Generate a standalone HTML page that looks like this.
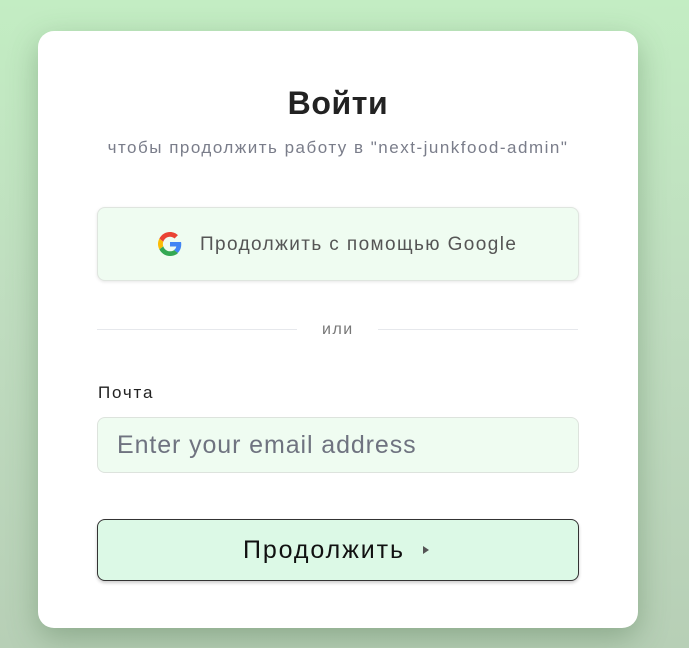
<!DOCTYPE html>
<html><head><meta charset="utf-8"><style>
html,body{margin:0;width:689px;height:648px;overflow:hidden}
body{background:linear-gradient(180deg,#c3edc3 0%,#bfdcbf 50%,#b7cfb6 100%);font-family:"Liberation Sans",sans-serif;position:relative}
.card{position:absolute;left:38px;top:31px;width:600px;height:597px;background:#fff;border-radius:16px;box-shadow:0 10px 30px rgba(60,100,60,.35)}
.abs{position:absolute;white-space:nowrap}
h1{position:absolute;top:83px;left:38px;width:600px;margin:0;text-align:center;font-size:32px;font-weight:bold;color:#222;line-height:40px;letter-spacing:0.6px}
.sub{top:138px;left:38px;width:600px;text-align:center;font-size:17px;color:#7a7d8a;letter-spacing:1.5px}
.g{left:97px;top:207px;width:480px;height:72px;border:1px solid #dfe5df;border-radius:8px;background:#effcf1;box-shadow:0 1px 3px rgba(0,0,0,.1)}
.gt{left:200px;top:234px;font-size:19px;color:#555;letter-spacing:1.4px}
.line{top:329px;height:1px;background:#e6e8ec}
.or{left:322px;top:321px;font-size:16px;color:#777;letter-spacing:1.5px}
.lab{left:98px;top:383px;font-size:17px;color:#222;letter-spacing:1.8px}
.in{left:97px;top:417px;width:480px;height:54px;border:1px solid #dde3dd;border-radius:8px;background:#effcf1}
.ph{left:117px;top:431px;font-size:25px;color:#6f7380;letter-spacing:0.9px}
.btn{left:97px;top:519px;width:480px;height:60px;border:1px solid #333;border-radius:8px;background:#dcf9e6;box-shadow:0 2px 3px rgba(0,0,0,.2)}
.bt{left:243px;top:536px;font-size:25px;color:#111;letter-spacing:1.9px}
</style></head><body>
<div class="card"></div>
<h1>Войти</h1>
<div class="abs sub">чтобы продолжить работу в "next-junkfood-admin"</div>
<div class="abs g"></div>
<svg class="abs" style="left:158px;top:232px" width="24" height="24" viewBox="0 0 48 48">
<path fill="#EA4335" d="M24 9.5c3.5 0 6.6 1.2 9.1 3.6l6.8-6.8C35.8 2.4 30.3 0 24 0 14.6 0 6.6 5.4 2.7 13.3l7.9 6.1C12.5 13.6 17.8 9.5 24 9.5z"/>
<path fill="#4285F4" d="M46.5 24.5c0-1.6-.1-3.1-.4-4.5H24v9h12.6c-.5 2.9-2.2 5.4-4.7 7.1l7.6 5.9c4.4-4.1 7-10.1 7-17.5z"/>
<path fill="#FBBC05" d="M10.5 28.6c-.5-1.4-.8-3-.8-4.6s.3-3.2.8-4.6l-7.9-6.1C1 16.6 0 20.2 0 24s1 7.4 2.7 10.7l7.8-6.1z"/>
<path fill="#34A853" d="M24 48c6.5 0 11.9-2.1 15.9-5.8l-7.6-5.9c-2.1 1.4-4.9 2.3-8.3 2.3-6.2 0-11.5-4.2-13.4-9.9l-7.9 6.1C6.6 42.6 14.6 48 24 48z"/>
</svg>
<div class="abs gt">Продолжить с помощью Google</div>
<div class="abs line" style="left:97px;width:200px"></div>
<div class="abs line" style="left:378px;width:200px"></div>
<div class="abs or">или</div>
<div class="abs lab">Почта</div>
<div class="abs in"></div>
<div class="abs ph">Enter your email address</div>
<div class="abs btn"></div>
<div class="abs bt">Продолжить</div>
<svg class="abs" style="left:422px;top:545px" width="8" height="10"><path d="M1 1L7 5L1 9Z" fill="#555"/></svg>
</body></html>
